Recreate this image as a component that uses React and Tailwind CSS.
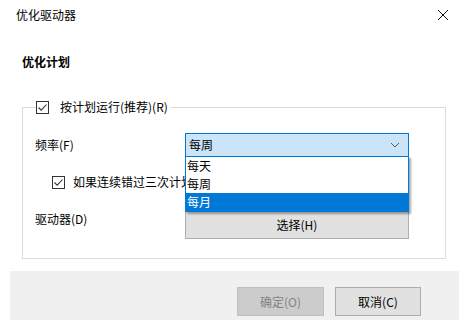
import React from 'react';

const font = { fontFamily: '"Noto Sans CJK SC", "Microsoft YaHei", sans-serif' };

const CheckBox = () => (
  <span className="w-[13px] h-[13px] border border-[#333] bg-white flex items-center justify-center shrink-0">
    <svg width="11" height="11" viewBox="0 0 11 11">
      <path d="M1.5 5.5 L4.2 8.2 L9.5 2.5" fill="none" stroke="#333" strokeWidth="1.1" />
    </svg>
  </span>
);

const App = () => {
  const options = ['每天', '每周', '每月'];

  return (
    <div className="w-[459px] h-[320px] bg-white text-[12px] text-black overflow-hidden flex flex-col" style={font}>
      {/* Title bar */}
      <div className="h-[30px] flex items-center justify-between pl-[16px] pr-[10px] shrink-0">
        <span className="leading-[16px]">优化驱动器</span>
        <svg width="12" height="12" viewBox="0 0 12 12">
          <path d="M1 1 L11 11 M11 1 L1 11" stroke="#111" strokeWidth="1" />
        </svg>
      </div>

      {/* Content */}
      <div className="pl-[22px] pr-[13px]">
        <p className="mt-[24px] leading-[16px] font-bold">优化计划</p>

        <fieldset className="mt-[29px] border border-[#dcdcdc] pl-[12px] pr-[36px] pb-[19px]">
          <legend className="ml-[1px] pr-[2px] h-[16px] flex items-center gap-[11px]">
            <CheckBox />
            <span className="leading-[16px]">按计划运行(推荐)(R)</span>
          </legend>

          {/* Frequency */}
          <div className="mt-[18px] h-[24px] flex items-center">
            <span className="w-[150px] leading-[16px]">频率(F)</span>
            <div className="relative w-[224px] h-[24px] bg-[#cce4f7] border border-[#0078d7] flex items-center justify-between pl-[3px] pr-[8px]">
              <span className="leading-[16px]">每周</span>
              <svg width="10" height="6" viewBox="0 0 10 6">
                <path d="M1 1 L5 5 L9 1" fill="none" stroke="#555" strokeWidth="1" />
              </svg>

              {/* Open list */}
              <div className="absolute left-[-1px] top-[22px] w-[224px] bg-white border border-[#0078d7] shadow-[2px_2px_2px_rgba(0,0,0,0.35)] z-10">
                {options.map((item, index) => (
                  <div
                    key={index}
                    className={`h-[18px] flex items-center pl-[1px] leading-[16px] ${
                      index === 2 ? 'bg-[#0078d7] text-white' : 'bg-white'
                    }`}
                  >
                    {item}
                  </div>
                ))}
              </div>
            </div>
          </div>

          {/* Missed runs (partly hidden behind the open list) */}
          <div className="mt-[17px] h-[16px] flex items-center gap-[8px] pl-[17px] whitespace-nowrap">
            <CheckBox />
            <span className="w-[112px] overflow-hidden leading-[16px]">如果连续错过三次计划的运行，则增加任务优先级(I)</span>
          </div>

          {/* Drives */}
          <div className="mt-[19px] flex items-start">
            <span className="w-[150px] mt-[2px] leading-[16px]">驱动器(D)</span>
            <button className="w-[224px] h-[30px] bg-[#e1e1e1] border border-[#adadad] flex items-center justify-center pt-[2px]">
              选择(H)
            </button>
          </div>
        </fieldset>
      </div>

      {/* Footer */}
      <div className="mt-[12px] ml-[10px] flex-1 bg-[#f0f0f0] flex justify-end items-start pt-[16px] pr-[38px] gap-[11px]">
        <button className="w-[87px] h-[29px] bg-[#cccccc] border border-[#bfbfbf] text-[#838383]">确定(O)</button>
        <button className="w-[86px] h-[29px] bg-[#e1e1e1] border border-[#adadad]">取消(C)</button>
      </div>
    </div>
  );
};

export default App;
